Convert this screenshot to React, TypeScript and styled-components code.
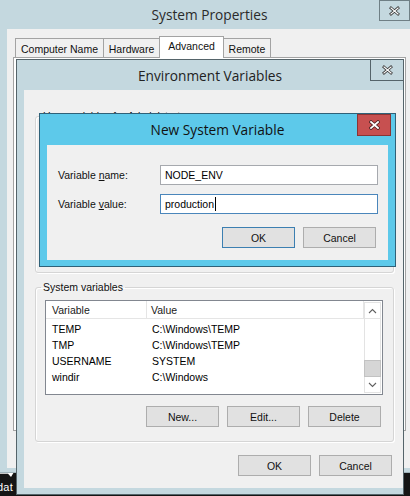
import React from "react";
import styled, { createGlobalStyle, css } from "styled-components";

const Global = createGlobalStyle`
  html, body { margin: 0; padding: 0; }
  body {
    width: 410px; height: 496px; overflow: hidden; background: #151515;
    font-family: "Liberation Sans", Arial, sans-serif; font-size: 10.5px; color: #000;
  }
  #root { width: 410px; height: 496px; }
`;

const Desktop = styled.div`
  position: relative;
  width: 410px;
  height: 496px;
  overflow: hidden;
  background: #151515;
`;

const DesktopIcon = styled.div`
  position: absolute;
  left: -3px;
  top: 472px;
  width: 19px;
  overflow: hidden;
  display: flex;
  flex-direction: column;
  gap: 3px;
`;

const IconLabel = styled.span`
  color: #fff;
  font-size: 11px;
  line-height: 13px;
  letter-spacing: 0.2px;
  white-space: nowrap;
`;

const Window = styled.div<{ $x: number; $y: number; $w: number; $h: number; $frame: string; $edge: string }>`
  position: absolute;
  left: ${(p) => p.$x}px;
  top: ${(p) => p.$y}px;
  width: ${(p) => p.$w}px;
  height: ${(p) => p.$h}px;
  box-sizing: border-box;
  background: ${(p) => p.$frame};
  border: 1px solid ${(p) => p.$edge};
  display: flex;
  flex-direction: column;
`;

const TitleBar = styled.div<{ $h: number }>`
  position: relative;
  height: ${(p) => p.$h}px;
  flex: none;
  display: flex;
  align-items: center;
  justify-content: center;
`;

const TitleText = styled.span<{ $color?: string }>`
  font-family: "Open Sans", "Noto Sans", sans-serif;
  font-size: 13.7px;
  line-height: 16px;
  color: ${(p) => p.$color || "#222"};
  margin-top: 1px;
`;

const CloseButton = styled.div<{ $top: number; $right: number; $w: number; $h: number; $red?: boolean; $edge: string }>`
  position: absolute;
  top: ${(p) => p.$top}px;
  right: ${(p) => p.$right}px;
  width: ${(p) => p.$w}px;
  height: ${(p) => p.$h}px;
  box-sizing: border-box;
  border: 1px solid ${(p) => p.$edge};
  background: ${(p) => (p.$red ? "#c75050" : "transparent")};
  display: flex;
  align-items: center;
  justify-content: center;
`;

const FrameBody = styled.div<{ $pad: string }>`
  flex: 1;
  min-height: 0;
  display: flex;
  padding: ${(p) => p.$pad};
`;

const Client = styled.div<{ $pad?: string }>`
  flex: 1;
  min-width: 0;
  background: #f0f0f0;
  display: flex;
  flex-direction: column;
  align-items: stretch;
  padding: ${(p) => p.$pad || "0"};
  overflow: hidden;
`;

const TabStrip = styled.div`
  display: flex;
  align-items: flex-end;
  height: 21px;
  margin: 7px 0 0 8px;
  flex: none;
`;

const Tab = styled.div<{ $w: number; $active?: boolean }>`
  width: ${(p) => p.$w}px;
  box-sizing: border-box;
  border: 1px solid #a3a3a3;
  border-bottom: none;
  display: flex;
  align-items: center;
  justify-content: center;
  color: #111;
  & + & { margin-left: -1px; }
  ${(p) =>
    p.$active
      ? css`
          height: 22px;
          margin-bottom: -1px;
          background: #fff;
          position: relative;
          z-index: 1;
          padding-bottom: 3px;
        `
      : css`
          height: 19px;
          background: #f0f0f0;
          padding-top: 1px;
        `}
`;

const TabPanel = styled.div`
  width: 393px;
  height: 374px;
  box-sizing: border-box;
  margin-left: 6px;
  border: 1px solid #a3a3a3;
  background: #fff;
  flex: none;
`;

const GroupBox = styled.fieldset<{ $mt?: number; $tail?: number }>`
  margin: ${(p) => p.$mt || 0}px 0 0 0;
  padding: 6px 10px ${(p) => p.$tail ?? 14}px 9px;
  min-width: 0;
  border: 1px solid #d5d5d5;
  border-radius: 3px;
  box-shadow: inset 1px 1px 0 #fff, 1px 1px 0 #fff;
  display: flex;
  flex-direction: column;
  flex: none;
`;

const Legend = styled.legend`
  padding: 0 2px;
  margin-left: -4px;
  line-height: 14px;
  color: #111;
`;

const ListBox = styled.div`
  height: 95px;
  box-sizing: border-box;
  border: 1px solid #828790;
  background: #fff;
  display: flex;
  flex: none;
`;

const ListMain = styled.div`
  flex: 1;
  display: flex;
  flex-direction: column;
  min-width: 0;
`;

const ListHeader = styled.div`
  display: grid;
  grid-template-columns: 101px 1fr;
  height: 18px;
  box-sizing: border-box;
  border-bottom: 1px solid #e5e5e5;
  border-right: 1px solid #e5e5e5;
`;

const HeaderCell = styled.div<{ $sep?: boolean }>`
  display: flex;
  align-items: center;
  padding-left: ${(p) => (p.$sep ? 6 : 4)}px;
  border-right: ${(p) => (p.$sep ? "1px solid #e5e5e5" : "none")};
  color: #1a1a1a;
  white-space: nowrap;
`;

const ListRows = styled.div`
  padding-top: 2px;
  display: flex;
  flex-direction: column;
`;

const ListRow = styled.div`
  display: grid;
  grid-template-columns: 101px 1fr;
  height: 16px;
  align-items: center;
`;

const Cell = styled.div<{ $first?: boolean }>`
  padding-left: ${(p) => (p.$first ? 6 : 5)}px;
  white-space: nowrap;
  overflow: hidden;
`;

const ScrollBar = styled.div`
  width: 17px;
  margin: 1px 1px 1px 0;
  box-sizing: border-box;
  border: 1px solid #e3e3e3;
  background: #fff;
  display: flex;
  flex-direction: column;
`;

const ScrollArrow = styled.div`
  height: 15px;
  flex: none;
  display: flex;
  align-items: center;
  justify-content: center;
  background: #fff;
`;

const ScrollTrack = styled.div`
  flex: 1;
  display: flex;
  flex-direction: column;
  justify-content: flex-end;
  border-top: 1px solid #e3e3e3;
`;

const ScrollThumb = styled.div`
  height: 17px;
  box-sizing: border-box;
  background: #d6d6d6;
  border: 1px solid #c2c2c2;
  margin: 0 -1px;
`;

const ButtonRow = styled.div<{ $mt: number }>`
  display: flex;
  justify-content: flex-end;
  gap: 8px;
  margin: ${(p) => p.$mt}px 2px 0 0;
  flex: none;
`;

const Button = styled.div<{ $default?: boolean }>`
  width: 73px;
  height: 21px;
  box-sizing: border-box;
  border: 1px solid ${(p) => (p.$default ? "#3c7fb1" : "#adadad")};
  background: #e1e1e1;
  display: flex;
  align-items: center;
  justify-content: center;
  color: #111;
`;

const FieldGrid = styled.div`
  display: grid;
  grid-template-columns: 102px 218px;
  row-gap: 9px;
  align-items: center;
`;

const FieldLabel = styled.label`
  color: #111;
  white-space: nowrap;
  & u { text-decoration: underline; text-underline-offset: 1px; }
`;

const TextBox = styled.div<{ $focused?: boolean }>`
  height: 20px;
  box-sizing: border-box;
  border: 1px solid ${(p) => (p.$focused ? "#4a86bb" : "#a6a9ae")};
  background: #fff;
  display: flex;
  align-items: center;
  padding-left: 4px;
  color: #000;
`;

const Caret = styled.span`
  display: inline-block;
  width: 1px;
  height: 14px;
  background: #000;
  margin-left: 1px;
`;

const XGlyph = ({ bold }: { bold?: boolean }) => (
  <svg width="11" height="10" viewBox="0 0 11 10">
    <path
      d="M2 2 L9 8 M9 2 L2 8"
      stroke={bold ? "#4a2020" : "#3a3a3a"}
      strokeWidth={bold ? 3.4 : 2.8}
      strokeLinecap="square"
      fill="none"
    />
    <path d="M2 2 L9 8 M9 2 L2 8" stroke="#fff" strokeWidth={bold ? 1.8 : 1.2} strokeLinecap="square" fill="none" />
  </svg>
);

const Chevron = ({ up }: { up?: boolean }) => (
  <svg width="9" height="6" viewBox="0 0 9 6">
    <polyline
      points={up ? "1,5 4.5,1.5 8,5" : "1,1 4.5,4.5 8,1"}
      stroke="#606060"
      strokeWidth="1.1"
      fill="none"
    />
  </svg>
);

type Row = [string, string];

const VarList = ({ rows }: { rows: Row[] }) => (
  <ListBox>
    <ListMain>
      <ListHeader>
        <HeaderCell $sep>Variable</HeaderCell>
        <HeaderCell>Value</HeaderCell>
      </ListHeader>
      <ListRows>
        {rows.map(([k, v]) => (
          <ListRow key={k}>
            <Cell $first>{k}</Cell>
            <Cell>{v}</Cell>
          </ListRow>
        ))}
      </ListRows>
    </ListMain>
    <ScrollBar>
      <ScrollArrow>
        <Chevron up />
      </ScrollArrow>
      <ScrollTrack>
        <ScrollThumb />
      </ScrollTrack>
      <ScrollArrow>
        <Chevron />
      </ScrollArrow>
    </ScrollBar>
  </ListBox>
);

const systemRows: Row[] = [
  ["TEMP", "C:\\Windows\\TEMP"],
  ["TMP", "C:\\Windows\\TEMP"],
  ["USERNAME", "SYSTEM"],
  ["windir", "C:\\Windows"],
];

const tabs: { label: string; w: number; active?: boolean }[] = [
  { label: "Computer Name", w: 89 },
  { label: "Hardware", w: 57 },
  { label: "Advanced", w: 65, active: true },
  { label: "Remote", w: 48 },
];

const FRAME = "#c4d8df";

export default function App() {
  return (
    <>
      <Global />
      <Desktop>
        <DesktopIcon>
          <svg width="20" height="6" viewBox="0 0 20 6">
            <polygon points="3,1 11,1 11,0 17,0 14,5 11,1.8 3,1.8" fill="#fff" />
          </svg>
          <IconLabel>dat</IconLabel>
        </DesktopIcon>

        <Window $x={-1} $y={-1} $w={421} $h={474} $frame={FRAME} $edge="#9fb2b9">
          <TitleBar $h={29}>
            <TitleText $color="#2a2a2a">System Properties</TitleText>
            <CloseButton $top={0} $right={9} $w={31} $h={21} $edge="#6f7f85">
              <XGlyph />
            </CloseButton>
          </TitleBar>
          <FrameBody $pad="0 8px 4px 7px">
            <Client>
              <TabStrip>
                {tabs.map((t) => (
                  <Tab key={t.label} $w={t.w} $active={t.active}>
                    {t.label}
                  </Tab>
                ))}
              </TabStrip>
              <TabPanel />
            </Client>
          </FrameBody>
        </Window>

        <Window $x={16} $y={59} $w={388} $h={436} $frame={FRAME} $edge="#55646a">
          <TitleBar $h={30}>
            <TitleText>Environment Variables</TitleText>
            <CloseButton $top={-1} $right={-1} $w={34} $h={22} $edge="#55646a">
              <XGlyph />
            </CloseButton>
          </TitleBar>
          <FrameBody $pad="0 0 6px 7px">
            <Client $pad="19px 9px 12px 11px">
              <GroupBox $tail={48}>
                <Legend>User variables for Administrator</Legend>
                <VarList rows={[]} />
              </GroupBox>
              <GroupBox $mt={7}>
                <Legend>System variables</Legend>
                <VarList rows={systemRows} />
                <ButtonRow $mt={11}>
                  <Button>New...</Button>
                  <Button>Edit...</Button>
                  <Button>Delete</Button>
                </ButtonRow>
              </GroupBox>
              <ButtonRow $mt={13}>
                <Button>OK</Button>
                <Button>Cancel</Button>
              </ButtonRow>
            </Client>
          </FrameBody>
        </Window>

        <Window $x={39} $y={113} $w={357} $h={154} $frame="#5dc9ea" $edge="#2f6178">
          <TitleBar $h={31}>
            <TitleText $color="#111">New System Variable</TitleText>
            <CloseButton $top={0} $right={4} $w={34} $h={22} $red $edge="#8a3434">
              <XGlyph bold />
            </CloseButton>
          </TitleBar>
          <FrameBody $pad="0 7px 6px 7px">
            <Client $pad="20px 10px 12px 11px">
              <FieldGrid>
                <FieldLabel>
                  Variable <u>n</u>ame:
                </FieldLabel>
                <TextBox>NODE_ENV</TextBox>
                <FieldLabel>
                  Variable <u>v</u>alue:
                </FieldLabel>
                <TextBox $focused>
                  production
                  <Caret />
                </TextBox>
              </FieldGrid>
              <ButtonRow $mt={13}>
                <Button $default>OK</Button>
                <Button>Cancel</Button>
              </ButtonRow>
            </Client>
          </FrameBody>
        </Window>
      </Desktop>
    </>
  );
}
